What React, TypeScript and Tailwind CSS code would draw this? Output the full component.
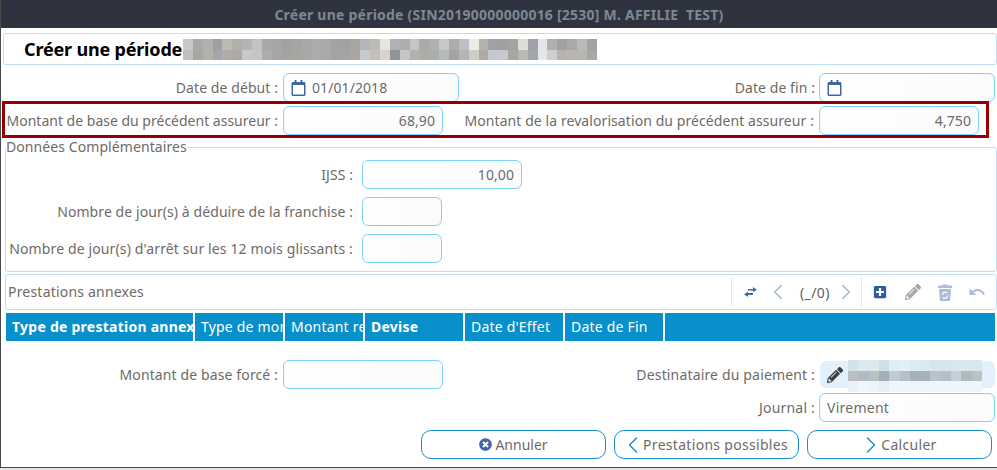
import React from "react";
import { FaRegCalendar, FaTimesCircle, FaPlusSquare, FaPencilAlt } from "react-icons/fa";
import { MdUndo } from "react-icons/md";
import { ChevronLeft, ChevronRight } from "lucide-react";

const m1 = [
  "c8c8c6 a9a9a8 b5b1aa 9aa0a5 bcb9b5 b2aeaa b1b4b8 c3c2bf a6a8aa a4a5a5 a2a2a0 a5a4a2 a9a8a5 a9abac a8aaab a2a3a5 a1a2a3 a6a5a1 b2b6ba bfbab5 e6e5e0 aeb1b6 b0aca7 c3c6c8 aeaba7 adb1b3 c6c9cb b0ada7 bcc1c6 efece6 b3b2af 9ea2a8 9da0a4 a5a39d dedcd8 9ea1a5 e4e7ea b3afab a5a29e a9a9a9 bdb9b4 9fa2a7".split(" "),
  "bfbfbe a7a6a5 b4b1ac a2a7ab aeaba8 acaaa7 c7c8ca c6c5c3 a9adb0 a6a6a5 a3a3a1 a7a6a3 a9a8a5 aaabab a8a9a9 a4a4a5 a3a3a3 a8a7a3 c5cbd0 c4bfbb d6d2cd 8f939a c3c6c8 b2b2b0 afaba7 abaeb1 b6b9b8 a4a4a3 b4b5b5 cfcec8 aeaba5 c4c8d0 c6c9ce a9a69f bab8b3 a2a5aa e4e7ea cfcfcf b7b2ad b9b6b2 b9b6b2 a8a8ab".split(" "),
];
const m2 = [
  "d3e2ea dbe8f0 dce9ee cfe0e8 dfedf6 e1eff9 dceaf3 d9e8f1 d7e5ee d7e5ef d9e8f0 d8e6ef d8e6ef".split(" "),
  "b8c0c4 b0bac2 b9c2c3 a3aeb8 c0cbd2 b6c0ca a8b0b9 a8b0b9 bac3cd b4bfc8 c6d1d6 b0b9bd b9c3c5".split(" "),
  "eaf0f5 f0f6fc eef4fa e8eef6 eef5fc eef5fc eef5fc eef5fc eef5fc eef5fc eef5fc eef5fc eef5fc".split(" "),
];

function Mosaic({ rows, w, h, className }: { rows: string[][]; w: number; h: number; className?: string }) {
  return (
    <svg width={rows[0].length * w} height={rows.length * h} className={className} shapeRendering="crispEdges">
      {rows.map((r, y) => r.map((c, x) => <rect key={x + "-" + y} x={x * w} y={y * h} width={w + 0.5} height={h} fill={"#" + c} />))}
    </svg>
  );
}

function Label({ w, t, children }: { w: string; t?: string; children: React.ReactNode }) {
  return <div className={`${w} ${t ?? ""} shrink-0 whitespace-nowrap text-right text-[14px] text-[#6f6a66]`}>{children}</div>;
}

function Input({ w, right, children }: { w: string; right?: boolean; children?: React.ReactNode }) {
  return (
    <div className={`${w} flex h-[29px] shrink-0 items-center rounded-[6px] border border-[#7dd3fc] bg-gradient-to-r from-white to-[#fbfbfb] px-[7px] text-[14px] text-[#6b6b6b] ${right ? "justify-end" : ""}`}>
      {children}
    </div>
  );
}

const Cal = () => <FaRegCalendar className="h-[16px] w-[15px] text-[#3f68a5]" />;

function Th({ w, bold, children }: { w: string; bold?: boolean; children?: React.ReactNode }) {
  return (
    <div className={`${w} h-full shrink-0 overflow-hidden whitespace-nowrap bg-[#0890cc] pl-[6px] text-[14px] leading-[28px] text-white ${bold ? "font-bold tracking-[0.25px]" : "tracking-[0.2px]"}`}>
      {children}
    </div>
  );
}

function Btn({ className, children }: { className?: string; children: React.ReactNode }) {
  return (
    <div className={`flex h-[29px] w-[185px] items-center justify-center rounded-[10px] border border-[#1a90c8] bg-white text-[14px] text-[#6f6a66] ${className ?? ""}`}>
      {children}
    </div>
  );
}

function Chev({ dir, className, sw, size }: { dir: "l" | "r"; className: string; sw: number; size: number }) {
  const Icon = dir === "l" ? ChevronLeft : ChevronRight;
  return (
    <div className="flex w-[8px] shrink-0 justify-center">
      <Icon size={size} strokeWidth={sw} className={`shrink-0 ${className}`} />
    </div>
  );
}

function TrashRecycle() {
  return (
    <svg width="14" height="17" viewBox="0 0 14 17">
      <path d="M4.5 1.5 V0.5 H9.5 V1.5 H14 V4 H0 V1.5 Z" fill="#a9bcd9" />
      <path d="M1 5 H13 L12 17 H2 Z" fill="#a9bcd9" />
      <path d="M4.5 11 A2.6 2.6 0 0 1 9 9 M9.5 11.5 A2.6 2.6 0 0 1 5 13.5" fill="none" stroke="#fff" strokeWidth="1.2" />
    </svg>
  );
}

function Exchange() {
  return (
    <svg width="13" height="10" viewBox="0 0 13 10" fill="#3f68a5">
      <path d="M4 2 H9 V0 L13 2.75 L9 5 V3.5 H4 Z" />
      <path d="M9 6 H4 V4.75 L0 7.25 L4 10 V8 H9 Z" />
    </svg>
  );
}

export default function App() {
  return (
    <div className="h-[470px] w-[997px] overflow-hidden bg-[#e4e4e4] font-['Noto_Sans',sans-serif] tracking-[0.08px]">
      <div className="h-[468px] border-b-[1.5px] border-l border-[#4a4a4a] bg-white">
        <div className="flex h-[28px] items-center justify-center bg-[#2f333f] text-[14px] font-bold tracking-[0.23px] text-[#7e8793]">
          Créer une période (SIN20190000000016 [2530] M. AFFILIE&nbsp; TEST)
        </div>

        <div className="ml-[2px] mt-[5px] flex h-[32px] items-center rounded-[3px] border border-[#bcdcf7] pl-[20px]">
          <span className="text-[18px] font-bold tracking-[-0.18px] text-black">Créer une période</span>
          <Mosaic rows={m1} w={9.85} h={10.5} className="ml-[1px]" />
        </div>

        <div className="mt-[8px] flex h-[29px] items-center">
          <Label w="w-[277px]">Date de début :</Label>
          <div className="ml-[5px]">
            <Input w="w-[176px]">
              <Cal />
              <span className="ml-[6px]">01/01/2018</span>
            </Input>
          </div>
          <Label w="w-[356px]">Date de fin :</Label>
          <div className="ml-[4px]">
            <Input w="w-[176px]">
              <Cal />
            </Input>
          </div>
        </div>

        <div className="relative ml-[1px] -mt-px flex h-[37px] w-[987px] items-center border-[3px] border-[#960000] pt-[2px]">
          <Label w="w-[273px]" t="tracking-[0px]">Montant de base du précédent assureur :</Label>
          <div className="ml-[5px]">
            <Input w="w-[160px]" right>68,90</Input>
          </div>
          <Label w="w-[371px]">Montant de la revalorisation du précédent assureur :</Label>
          <div className="ml-[5px]">
            <Input w="w-[160px]" right>4,750</Input>
          </div>
        </div>

        <fieldset className="ml-[4px] mt-[1px] h-[133px] rounded-[3px] border border-[#bcdcf7] pl-0">
          <legend className="pr-px text-[14px] leading-[16px] text-[#6f6a66]">Données Complémentaires</legend>
          <div className="mt-[5px] flex h-[29px] items-center">
            <Label w="w-[347px]">IJSS :</Label>
            <div className="ml-[9px]"><Input w="w-[160px]" right>10,00</Input></div>
          </div>
          <div className="mt-[8px] flex h-[29px] items-center">
            <Label w="w-[347px]">Nombre de jour(s) à déduire de la franchise :</Label>
            <div className="ml-[9px]"><Input w="w-[80px]" /></div>
          </div>
          <div className="mt-[8px] flex h-[29px] items-center">
            <Label w="w-[347px]" t="tracking-[0.13px]">Nombre de jour(s) d'arrêt sur les 12 mois glissants :</Label>
            <div className="ml-[9px]"><Input w="w-[80px]" /></div>
          </div>
        </fieldset>

        <div className="ml-[4px] mt-[2px] flex h-[36px] items-center rounded-[3px] border border-[#bcdcf7] pb-[2px] pl-[2px] text-[14px] tracking-[0.2px] text-[#6f6a66]">
          <span>Prestations annexes</span>
          <div className="ml-auto mt-[2px] flex h-[30px] items-center pr-[3px]">
            <div className="h-full w-px bg-[#e6e6e6]" />
            <div className="flex w-[129px] items-center">
              <div className="flex w-[37px] justify-center"><Exchange /></div>
              <div className="ml-[5px]"><Chev dir="l" size={26} sw={1.3} className="text-[#9db4d6]" /></div>
              <span className="ml-[18px] w-[35px] tracking-[0.4px] text-[#5f5f5f]">(_/0)</span>
              <div className="ml-[7px]"><Chev dir="r" size={26} sw={1.3} className="text-[#9db4d6]" /></div>
            </div>
            <div className="h-full w-px bg-[#e6e6e6]" />
            <div className="flex items-center">
              <div className="flex w-[35px] justify-center"><FaPlusSquare className="h-[14px] w-[14px] text-[#2f5da3]" /></div>
              <div className="flex w-[32px] justify-center"><FaPencilAlt className="h-[16px] w-[16px] text-[#a6a6a6]" /></div>
              <div className="flex w-[32px] justify-center"><TrashRecycle /></div>
              <div className="flex w-[32px] justify-center"><MdUndo className="h-[18px] w-[18px] text-[#a9bcd9]" /></div>
            </div>
          </div>
        </div>

        <div className="ml-[5px] mt-[3px] flex h-[28px] w-[989px] gap-[2px]">
          <Th w="w-[187px]" bold>Type de prestation annexe</Th>
          <Th w="w-[88px]">Type de montant</Th>
          <Th w="w-[78px]">Montant remboursé</Th>
          <Th w="w-[98px]" bold>Devise</Th>
          <Th w="w-[98px]">Date d'Effet</Th>
          <Th w="w-[98px]">Date de Fin</Th>
          <Th w="w-[330px]" />
        </div>

        <div className="mt-[19px] flex h-[29px] items-center">
          <Label w="w-[277px]" t="tracking-[0.12px]">Montant de base forcé :</Label>
          <div className="ml-[5px]"><Input w="w-[160px]" /></div>
          <Label w="w-[372px]" t="tracking-[0.16px]">Destinataire du paiement :</Label>
          <div className="relative ml-[5px] flex h-[27px] w-[175px] items-center rounded-[6px] bg-[#e1f0fb] pl-[7px]">
            <FaPencilAlt className="h-[16px] w-[16px] text-[#404040]" />
            <Mosaic rows={m2} w={10.3} h={10.5} className="absolute left-[28px] top-[-1px]" />
          </div>
        </div>

        <div className="mt-[4px] flex h-[29px] items-center justify-end">
          <Label w="w-[100px]" t="tracking-[0.2px]">Journal :</Label>
          <div className="ml-[4px] mr-[2px]">
            <Input w="w-[176px]"><span className="tracking-[0.25px]">Virement</span></Input>
          </div>
        </div>

        <div className="mt-[8px] flex justify-end gap-[8px] pr-[5px]">
          <Btn className="tracking-[0px]"><FaTimesCircle className="mr-[3px] h-[13px] w-[13px] text-[#3f68a5]" />Annuler</Btn>
          <Btn className="pl-[4px] tracking-[0.3px]"><Chev dir="l" size={28} sw={1.25} className="text-[#1a90c8]" /><span className="ml-[6px]">Prestations possibles</span></Btn>
          <Btn className="pl-[5px] tracking-[0.3px]"><Chev dir="r" size={28} sw={1.25} className="text-[#1a90c8]" /><span className="ml-[6px]">Calculer</span></Btn>
        </div>
      </div>
    </div>
  );
}
